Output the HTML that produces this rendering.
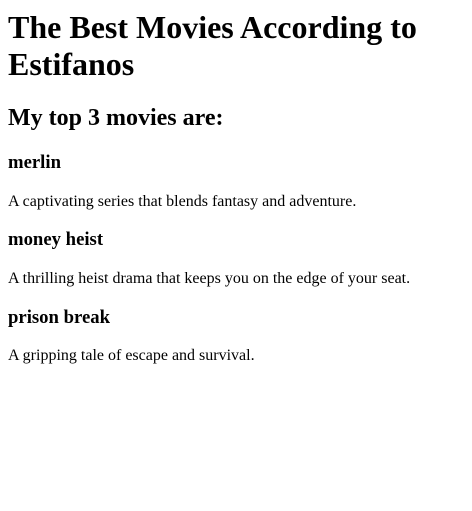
<!DOCTYPE html>
<html>
<head>
<meta charset="utf-8">
<style>
body { margin: 8px; font-family: "Liberation Serif", serif; color: #000; background: #fff; }
h1 { margin-top: 9.44px; }
</style>
</head>
<body>
<h1>The Best Movies According to Estifanos</h1>
<h2>My top 3 movies are:</h2>
<h3>merlin</h3>
<p>A captivating series that blends fantasy and adventure.</p>
<h3>money heist</h3>
<p>A thrilling heist drama that keeps you on the edge of your seat.</p>
<h3>prison break</h3>
<p>A gripping tale of escape and survival.</p>
</body>
</html>
